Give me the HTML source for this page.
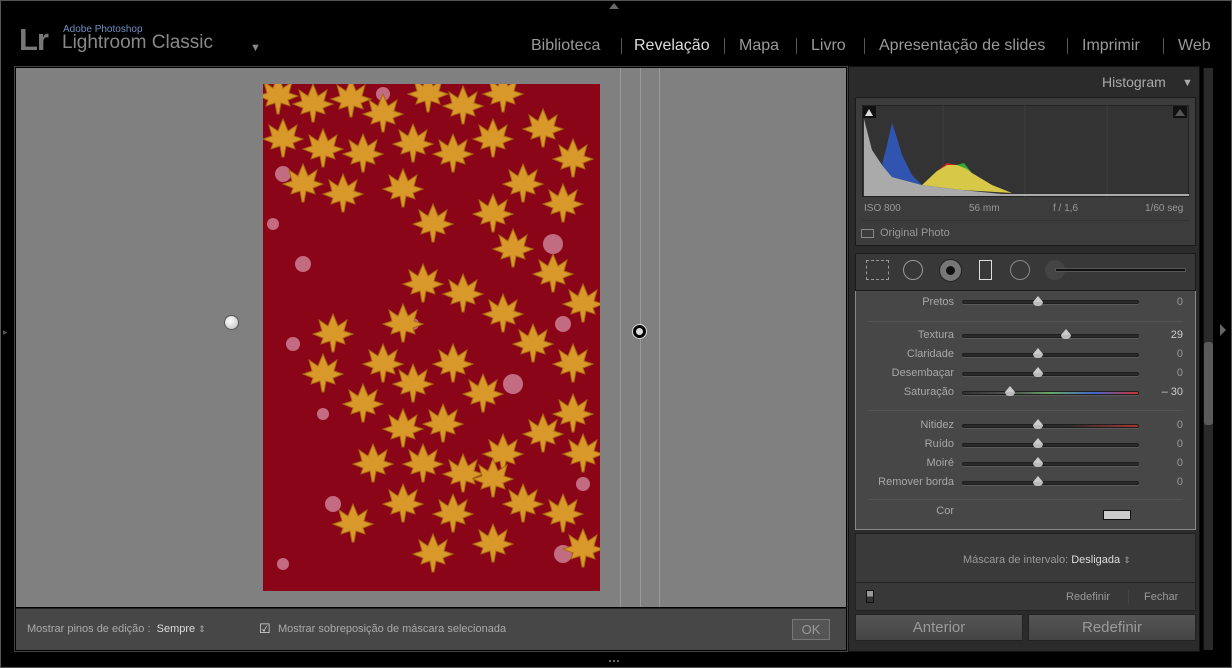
<!DOCTYPE html>
<html><head><meta charset="utf-8"><style>
*{margin:0;padding:0;box-sizing:border-box}
body{width:1232px;height:668px;background:#000;position:relative;overflow:hidden;font-family:"Liberation Sans",sans-serif;color:#aaa}
.a{position:absolute}
.nav{top:37px;font-size:16px;color:#9a9a9a;white-space:nowrap}
.sep{top:38px;width:1px;height:16px;background:#555}
.lbl{position:absolute;right:278px;font-size:11px;color:#a8a8a8;text-align:right}
.trk{position:absolute;left:962px;width:177px;height:4px;border-radius:2px;background:#2a2a2a;border:1px solid #1e1e1e;box-shadow:0 1px 0 #5a5a5a}
.th{position:absolute;width:0;height:0;border-left:5px solid transparent;border-right:5px solid transparent;border-bottom:6px solid #ccc}
.th:after{content:"";position:absolute;left:-5px;top:6px;width:10px;height:4px;background:#bbb;border-radius:0 0 5px 5px}
.val{position:absolute;right:49px;font-size:11px;color:#999}
.hr{position:absolute;left:868px;width:315px;height:1px;background:#555}
.btn{position:absolute;top:614px;height:27px;background:linear-gradient(#555,#444);border:1px solid #222;font-size:15px;color:#9a9a9a;text-align:center;line-height:25px}
</style></head><body>
<div class="a" style="left:0;top:0;width:1232px;height:668px;border:1px solid #555"></div>
<div class="a" style="left:609px;top:3px;border-left:5px solid transparent;border-right:5px solid transparent;border-bottom:6px solid #666"></div>
<div class="a" style="left:19px;top:22px;font-size:31px;color:#777;font-weight:bold;letter-spacing:-1px">Lr</div>
<div class="a" style="left:63px;top:24px;font-size:10px;color:#6f8fc0">Adobe Photoshop</div>
<div class="a" style="left:62px;top:32px;font-size:19px;color:#888">Lightroom Classic</div>
<div class="a" style="left:250px;top:42px;font-size:11px;color:#888">▼</div>
<div class="a nav" style="left:531px">Biblioteca</div><div class="a sep" style="left:621px"></div>
<div class="a nav" style="left:634px;color:#ddd">Revelação</div><div class="a sep" style="left:724px"></div>
<div class="a nav" style="left:739px">Mapa</div><div class="a sep" style="left:796px"></div>
<div class="a nav" style="left:811px">Livro</div><div class="a sep" style="left:864px"></div>
<div class="a nav" style="left:879px">Apresentação de slides</div><div class="a sep" style="left:1067px"></div>
<div class="a nav" style="left:1082px">Imprimir</div><div class="a sep" style="left:1163px"></div>
<div class="a nav" style="left:1178px">Web</div>

<div class="a" style="left:14px;top:66px;width:834px;height:586px;border:1px solid #444"></div>
<div class="a" style="left:16px;top:68px;width:830px;height:539px;background:#808080"></div>
<div class="a" style="left:620px;top:68px;width:1px;height:539px;background:#9a9a9a"></div>
<div class="a" style="left:640px;top:68px;width:1px;height:539px;background:#9a9a9a"></div>
<div class="a" style="left:659px;top:68px;width:1px;height:539px;background:#9a9a9a"></div>
<svg class="a" style="left:263px;top:84px" width="337" height="507" viewBox="0 0 337 507">
<defs><path id="L" d="M0,-20 L5,-8 L14,-14 L11,-3 L20,0 L10,4 L12,10 L3,7 L1,18 L-1,18 L-3,7 L-12,10 L-10,4 L-20,0 L-11,-3 L-14,-14 L-5,-8Z" fill="#d9982a" stroke="#a86a10" stroke-width="1"/></defs>
<rect width="337" height="507" fill="#8a0518"/>
<g fill="#e8b0c8" opacity=".6">
<circle cx="20" cy="90" r="8"/><circle cx="40" cy="180" r="8"/><circle cx="30" cy="260" r="7"/><circle cx="70" cy="420" r="8"/><circle cx="300" cy="470" r="9"/><circle cx="290" cy="160" r="10"/><circle cx="120" cy="10" r="7"/><circle cx="250" cy="300" r="10"/><circle cx="20" cy="480" r="6"/><circle cx="320" cy="400" r="7"/><circle cx="10" cy="140" r="6"/><circle cx="60" cy="330" r="6"/><circle cx="150" cy="240" r="6"/><circle cx="300" cy="240" r="8"/>
</g>
<g>
<use href="#L" x="15" y="12"/><use href="#L" x="50" y="20"/><use href="#L" x="88" y="15"/><use href="#L" x="120" y="30"/><use href="#L" x="165" y="10"/><use href="#L" x="200" y="22"/><use href="#L" x="240" y="10"/><use href="#L" x="280" y="45"/><use href="#L" x="20" y="55"/><use href="#L" x="60" y="65"/><use href="#L" x="100" y="70"/><use href="#L" x="150" y="60"/><use href="#L" x="190" y="70"/><use href="#L" x="230" y="55"/><use href="#L" x="310" y="75"/><use href="#L" x="40" y="100"/><use href="#L" x="80" y="110"/><use href="#L" x="140" y="105"/><use href="#L" x="170" y="140"/><use href="#L" x="260" y="100"/><use href="#L" x="300" y="120"/><use href="#L" x="230" y="130"/><use href="#L" x="250" y="165"/><use href="#L" x="290" y="190"/><use href="#L" x="160" y="200"/><use href="#L" x="200" y="210"/><use href="#L" x="240" y="230"/><use href="#L" x="320" y="220"/><use href="#L" x="270" y="260"/><use href="#L" x="310" y="280"/><use href="#L" x="140" y="240"/><use href="#L" x="120" y="280"/><use href="#L" x="70" y="250"/><use href="#L" x="60" y="290"/><use href="#L" x="100" y="320"/><use href="#L" x="150" y="300"/><use href="#L" x="190" y="280"/><use href="#L" x="220" y="310"/><use href="#L" x="180" y="340"/><use href="#L" x="140" y="345"/><use href="#L" x="160" y="380"/><use href="#L" x="200" y="390"/><use href="#L" x="240" y="370"/><use href="#L" x="280" y="350"/><use href="#L" x="310" y="330"/><use href="#L" x="320" y="370"/><use href="#L" x="110" y="380"/><use href="#L" x="140" y="420"/><use href="#L" x="190" y="430"/><use href="#L" x="230" y="395"/><use href="#L" x="260" y="420"/><use href="#L" x="300" y="430"/><use href="#L" x="170" y="470"/><use href="#L" x="230" y="460"/><use href="#L" x="320" y="465"/><use href="#L" x="90" y="440"/>
</g></svg>
<div class="a" style="left:224px;top:315px;width:15px;height:15px;border-radius:50%;background:radial-gradient(circle at 40% 35%,#fff,#bbb);border:1px solid #555"></div>
<div class="a" style="left:632px;top:324px;width:15px;height:15px;border-radius:50%;background:#000;border:1px solid #ddd"><div style="margin:3px;width:7px;height:7px;border-radius:50%;background:#ddd"></div></div>
<div class="a" style="left:16px;top:608px;width:830px;height:42px;background:#474747;border-top:1px solid #222"></div>
<div class="a" style="left:27px;top:623px;font-size:11px;color:#aaa">Mostrar pinos de edição :&nbsp; <span style="color:#ddd">Sempre</span> <span style="font-size:9px">⇕</span></div>
<div class="a" style="left:259px;top:621px;font-size:13px;color:#ddd">☑</div>
<div class="a" style="left:278px;top:623px;font-size:11px;color:#aaa">Mostrar sobreposição de máscara selecionada</div>
<div class="a" style="left:792px;top:619px;width:38px;height:21px;background:#555;border:1px solid #777;color:#999;font-size:13px;text-align:center;line-height:19px">OK</div>
<div class="a" style="left:609px;top:656px;width:10px;height:6px;border-bottom:2px dotted #666"></div>
<div class="a" style="left:3px;top:327px;font-size:9px;color:#555">▸</div>

<div class="a" style="left:848px;top:66px;width:352px;height:586px;background:#2b2b2b;border:1px solid #111"></div>
<div class="a" style="left:1102px;top:74px;font-size:14px;color:#aaa">Histogram</div>
<div class="a" style="left:1182px;top:77px;font-size:11px;color:#aaa">▼</div>
<div class="a" style="left:855px;top:97px;width:341px;height:149px;background:#3c3c3c;border:1px solid #1a1a1a"></div>
<svg class="a" style="left:862px;top:105px" width="327" height="92" viewBox="0 0 327 92">
<rect width="327" height="92" fill="#333" stroke="#111"/>
<g stroke="#3c3c3c"><path d="M81 0v92M163 0v92M245 0v92"/></g>
<path d="M2 14L10 45L20 60L30 72L60 80L100 85L140 89L327 89V91H2z" fill="#aaa"/>
<path d="M20 60L25 40L30 18L34 30L40 50L50 70L60 80L30 72z" fill="#3055b0"/>
<path d="M60 80L75 66L85 60L100 60L110 68L130 80L150 88L100 85z" fill="#d8c848"/>
<path d="M95 60L102 58L110 68L105 64z" fill="#3a3"/>
<path d="M75 66L85 58L95 60L85 60z" fill="#c22"/>
<rect x="1" y="1" width="13" height="12" fill="#111"/><path d="M3 11l4-7 4 7z" fill="#ddd"/>
<rect x="311" y="1" width="14" height="12" fill="#111"/><path d="M313 11l5-7 5 7z" fill="#555"/>
</svg>
<div class="a" style="left:864px;top:203px;font-size:10px;color:#999">ISO 800</div>
<div class="a" style="left:969px;top:203px;font-size:10px;color:#999">56 mm</div>
<div class="a" style="left:1053px;top:203px;font-size:10px;color:#999">f / 1,6</div>
<div class="a" style="left:1145px;top:203px;font-size:10px;color:#999">1/60 seg</div>
<div class="a" style="left:862px;top:220px;width:327px;height:1px;background:#333"></div>
<div class="a" style="left:861px;top:229px;width:13px;height:9px;border:1px solid #888"></div>
<div class="a" style="left:880px;top:227px;font-size:11px;color:#999">Original Photo</div>
<div class="a" style="left:855px;top:253px;width:341px;height:38px;background:#383838;border:1px solid #1a1a1a"></div>
<div class="a" style="left:866px;top:260px;width:23px;height:20px;border:1px dashed #999"></div>
<div class="a" style="left:903px;top:260px;width:20px;height:20px;border:1px solid #999;border-radius:50%"></div>
<div class="a" style="left:939px;top:259px;width:23px;height:23px;border-radius:50%;background:#777;border:1px solid #222"><div style="margin:6px;width:9px;height:9px;border-radius:50%;background:#111"></div></div>
<div class="a" style="left:979px;top:260px;width:13px;height:20px;border:1px solid #ddd"></div>
<div class="a" style="left:1010px;top:260px;width:20px;height:20px;border:1px solid #888;border-radius:50%"></div>
<div class="a" style="left:1045px;top:260px;width:20px;height:20px;border-radius:50%;background:#444"></div>
<div class="a" style="left:1055px;top:268px;width:131px;height:4px;background:#111;border:1px solid #555"></div>
<div class="a" style="left:855px;top:291px;width:341px;height:239px;background:#474747;border:1px solid #888;border-top:none"></div>

<div class="lbl" style="top:296px">Pretos</div><div class="trk" style="top:300px"></div><div class="th" style="left:1033px;top:296px"></div><div class="val" style="top:296px">0</div>
<div class="hr" style="top:321px"></div>
<div class="lbl" style="top:329px">Textura</div><div class="trk" style="top:334px"></div><div class="th" style="left:1061px;top:329px"></div><div class="val" style="top:329px;color:#ccc">29</div>
<div class="lbl" style="top:348px">Claridade</div><div class="trk" style="top:353px"></div><div class="th" style="left:1033px;top:348px"></div><div class="val" style="top:348px">0</div>
<div class="lbl" style="top:367px">Desembaçar</div><div class="trk" style="top:372px"></div><div class="th" style="left:1033px;top:367px"></div><div class="val" style="top:367px">0</div>
<div class="lbl" style="top:386px">Saturação</div><div class="trk" style="top:391px;background:linear-gradient(90deg,#333,#555 30%,#6a6 50%,#46c 75%,#c33)"></div><div class="th" style="left:1005px;top:386px"></div><div class="val" style="top:386px;color:#ccc">– 30</div>
<div class="hr" style="top:410px"></div>
<div class="lbl" style="top:419px">Nitidez</div><div class="trk" style="top:424px;background:linear-gradient(90deg,#2a2a2a 60%,#a33)"></div><div class="th" style="left:1033px;top:419px"></div><div class="val" style="top:419px">0</div>
<div class="lbl" style="top:438px">Ruído</div><div class="trk" style="top:443px"></div><div class="th" style="left:1033px;top:438px"></div><div class="val" style="top:438px">0</div>
<div class="lbl" style="top:457px">Moiré</div><div class="trk" style="top:462px"></div><div class="th" style="left:1033px;top:457px"></div><div class="val" style="top:457px">0</div>
<div class="lbl" style="top:476px">Remover borda</div><div class="trk" style="top:481px"></div><div class="th" style="left:1033px;top:476px"></div><div class="val" style="top:476px">0</div>
<div class="hr" style="top:499px"></div>
<div class="lbl" style="top:505px">Cor</div>
<div class="a" style="left:1103px;top:510px;width:28px;height:10px;border:1px solid #111;background:#ccc"></div>

<div class="a" style="left:855px;top:533px;width:341px;height:50px;background:#3a3a3a;border:1px solid #222"></div>
<div class="a" style="left:963px;top:554px;font-size:11px;color:#999">Máscara de intervalo: <span style="color:#ddd">Desligada</span> <span style="font-size:9px">⇕</span></div>
<div class="a" style="left:855px;top:582px;width:341px;height:29px;background:#383838;border:1px solid #222"></div>
<div class="a" style="left:866px;top:590px;width:8px;height:13px;background:linear-gradient(#999 50%,#333 50%);border:1px solid #111"></div>
<div class="a" style="left:1066px;top:591px;font-size:11px;color:#999">Redefinir</div>
<div class="a" style="left:1128px;top:590px;width:1px;height:14px;background:#444"></div>
<div class="a" style="left:1144px;top:591px;font-size:11px;color:#999">Fechar</div>
<div class="btn" style="left:855px;width:168px">Anterior</div>
<div class="btn" style="left:1028px;width:168px">Redefinir</div>
<div class="a" style="left:1203px;top:68px;width:10px;height:582px;background:#2a2a2a;border-left:1px solid #111"></div>
<div class="a" style="left:1204px;top:342px;width:9px;height:83px;background:#5a5a5a;border-radius:3px"></div>
<div class="a" style="left:1220px;top:324px;border-top:6px solid transparent;border-bottom:6px solid transparent;border-left:6px solid #666"></div>
</body></html>
